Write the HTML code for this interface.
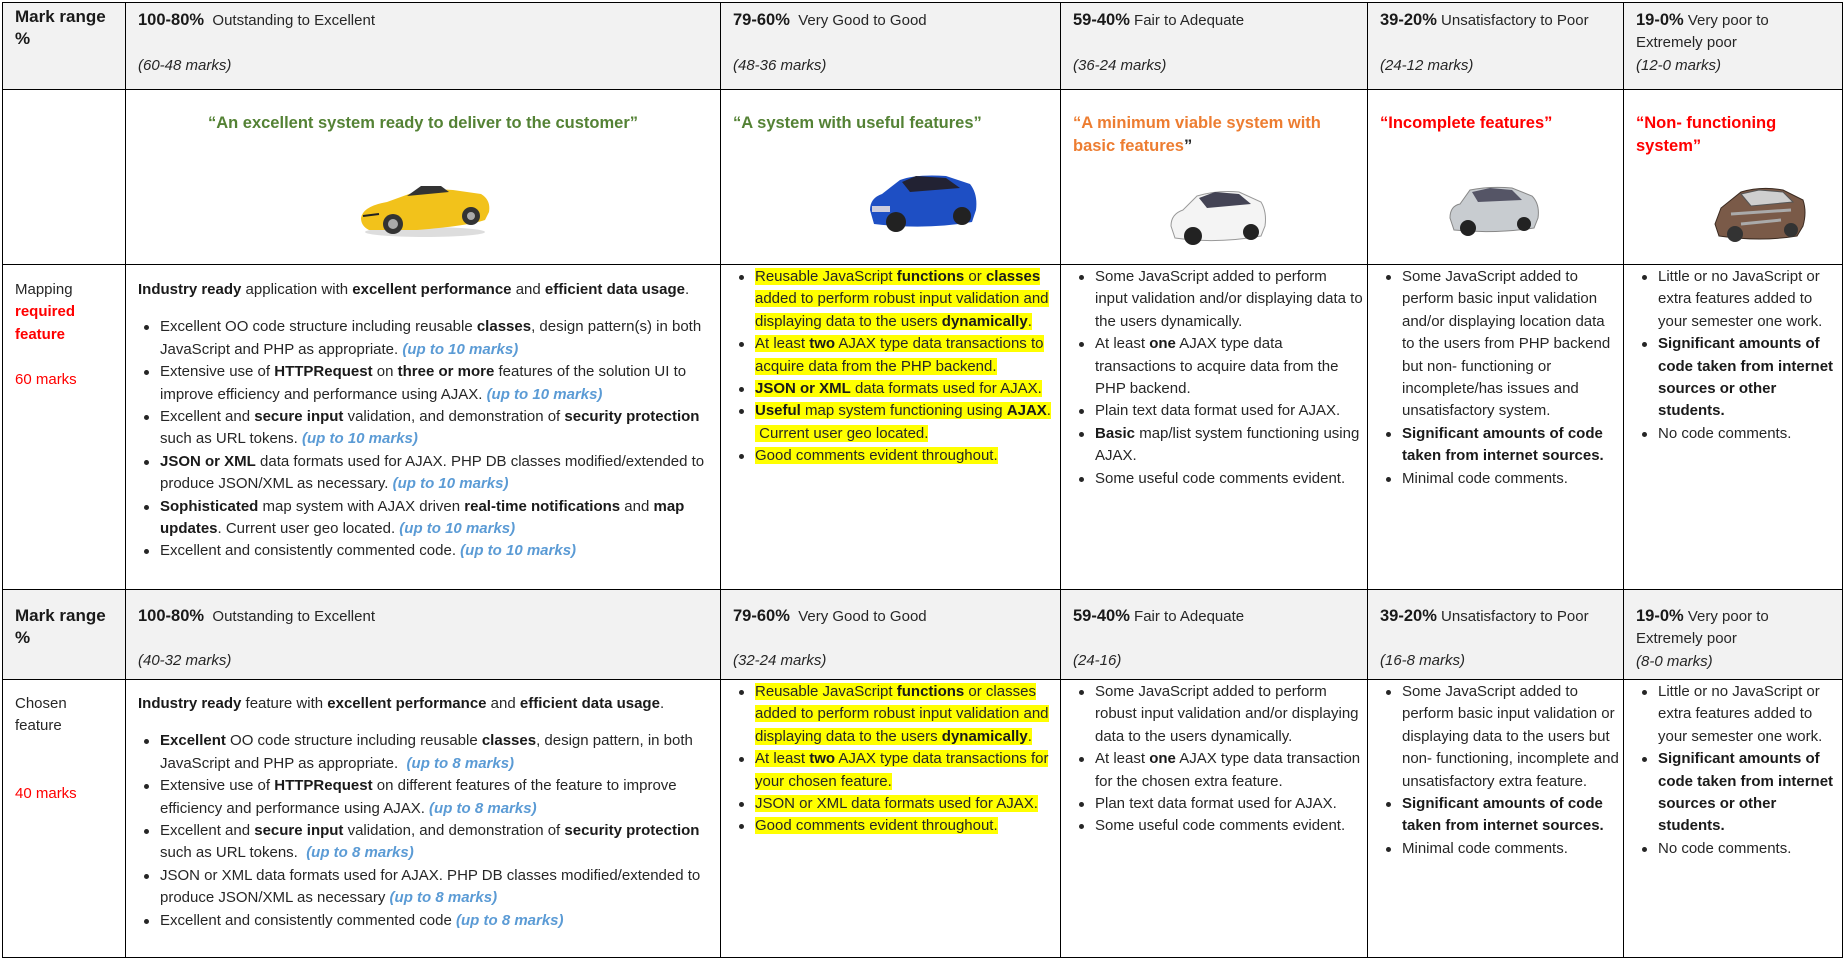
<!DOCTYPE html>
<html><head><meta charset="utf-8"><style>
*{margin:0;padding:0;box-sizing:border-box}
body{width:1846px;height:961px;background:#fff;position:relative;overflow:hidden;font-family:"Liberation Sans",Arial,sans-serif;font-size:15px;color:#262626;line-height:22.4px}
.c{position:absolute;border:1px solid #000;padding:6px 12px 0 12px;overflow:hidden}
.h{background:#f2f2f2}
b{font-weight:bold;color:#1a1a1a}
.hd b{font-size:16.5px}
i{font-style:italic}
ul{list-style:none}
li{position:relative;padding-left:22px}
li:before{content:"";position:absolute;left:6px;top:9px;width:5px;height:5px;border-radius:50%;background:#262626}
.hl{background:#ffff00}
.bl{color:#5b9bd5;font-weight:bold;font-style:italic}
.red{color:#ff0000}
.q{font-weight:bold;font-size:16.5px;line-height:23px}
.g{color:#548235}.o{color:#ed7d31}
svg{position:absolute}
</style></head><body>

<div class="c h hd" style="left:2px;top:2px;width:124px;height:88px;padding-top:3px;line-height:21px"><b style="font-size:17px">Mark range<br>%</b></div>
<div class="c h hd" style="left:125px;top:2px;width:596px;height:88px"><b>100-80%</b>&nbsp; Outstanding to Excellent<br><br><i>(60-48 marks)</i></div>
<div class="c h hd" style="left:720px;top:2px;width:341px;height:88px"><b>79-60%</b>&nbsp; Very Good to Good<br><br><i>(48-36 marks)</i></div>
<div class="c h hd" style="left:1060px;top:2px;width:308px;height:88px"><b>59-40%</b> Fair to Adequate<br><br><i>(36-24 marks)</i></div>
<div class="c h hd" style="left:1367px;top:2px;width:257px;height:88px"><b>39-20%</b> Unsatisfactory to Poor<br><br><i>(24-12 marks)</i></div>
<div class="c h hd" style="left:1623px;top:2px;width:220px;height:88px"><b>19-0%</b> Very poor to<br>Extremely poor<br><i>(12-0 marks)</i></div>

<div class="c" style="left:2px;top:89px;width:124px;height:176px"></div>
<div class="c" style="left:125px;top:89px;width:596px;height:176px;text-align:center;padding-top:22px"><span class="q g">“An excellent system ready to deliver to the customer”</span></div>
<div class="c" style="left:720px;top:89px;width:341px;height:176px;padding-top:22px"><span class="q g">“A system with useful features”</span></div>
<div class="c" style="left:1060px;top:89px;width:308px;height:176px;padding-top:22px"><div class="q o">“A minimum viable system with basic features<span style="color:#262626">”</span></div></div>
<div class="c" style="left:1367px;top:89px;width:257px;height:176px;padding-top:22px"><span class="q red">“Incomplete features”</span></div>
<div class="c" style="left:1623px;top:89px;width:220px;height:176px;padding-top:22px"><div class="q red">“Non- functioning system”</div></div>

<svg style="left:357px;top:180px" width="136" height="58" viewBox="0 0 136 58"><ellipse cx="68" cy="52" rx="60" ry="5" fill="#ddd"/><path d="M4 38 Q6 26 30 22 L52 14 Q70 8 96 10 L124 14 Q134 20 132 32 L128 40 Q110 46 60 50 L12 50 Q4 46 4 38Z" fill="#f2c21b"/><path d="M50 16 L64 6 L84 6 L92 12 Z" fill="#333"/><circle cx="36" cy="44" r="10" fill="#333"/><circle cx="36" cy="44" r="5" fill="#aaa"/><circle cx="114" cy="36" r="9" fill="#333"/><circle cx="114" cy="36" r="4" fill="#aaa"/><path d="M6 36 L22 34" stroke="#222" stroke-width="2"/></svg>
<svg style="left:866px;top:170px" width="114" height="66" viewBox="0 0 114 66"><path d="M4 40 Q4 28 16 24 L34 10 Q50 4 80 6 L104 14 Q112 24 110 40 L106 52 Q60 60 8 54Z" fill="#1e4fc4"/><path d="M36 12 L50 6 L80 8 L94 18 L44 22Z" fill="#223"/><circle cx="30" cy="52" r="10" fill="#222"/><circle cx="96" cy="46" r="9" fill="#222"/><rect x="6" y="36" width="18" height="6" fill="#ccd"/></svg>
<svg style="left:1167px;top:186px" width="102" height="62" viewBox="0 0 102 62"><path d="M4 40 Q4 28 16 24 L30 10 Q50 4 72 6 L94 16 Q100 26 98 40 L94 50 Q50 58 8 52Z" fill="#f4f4f4" stroke="#999"/><path d="M32 12 L48 6 L72 8 L84 18 L40 22Z" fill="#445"/><circle cx="26" cy="50" r="9" fill="#222"/><circle cx="84" cy="46" r="8" fill="#222"/></svg>
<svg style="left:1446px;top:184px" width="96" height="54" viewBox="0 0 96 54"><path d="M4 34 Q4 22 14 20 L24 6 Q44 2 66 4 L86 12 Q94 20 92 34 L88 44 Q48 50 8 46Z" fill="#c8ccd0" stroke="#888"/><path d="M26 8 L44 4 L66 6 L76 16 L32 18Z" fill="#556"/><circle cx="22" cy="44" r="8" fill="#222"/><circle cx="78" cy="40" r="7" fill="#222"/></svg>
<svg style="left:1711px;top:184px" width="98" height="62" viewBox="0 0 98 62"><path d="M4 40 L10 24 L30 8 Q50 2 72 6 L92 16 Q96 28 92 42 L86 52 Q50 58 8 52Z" fill="#7a5a48" stroke="#3a2a20"/><path d="M30 10 L48 6 L72 8 L82 18 L40 22Z" fill="#cfcfcf" stroke="#555"/><path d="M20 30 L80 26 M30 40 L70 36" stroke="#aaa" stroke-width="3"/><circle cx="24" cy="50" r="8" fill="#333"/><circle cx="80" cy="46" r="7" fill="#333"/></svg>

<div class="c" style="left:2px;top:264px;width:124px;height:326px;padding-top:14px">Mapping<br><b class="red">required<br>feature</b><br><br><span class="red">60 marks</span></div>
<div class="c" style="left:125px;top:264px;width:596px;height:326px;padding-top:14px;padding-right:4px">
<div style="margin-bottom:15px"><b>Industry ready</b> application with <b>excellent performance</b> and <b>efficient data usage</b>.</div>
<ul>
<li>Excellent OO code structure including reusable <b>classes</b>, design pattern(s) in both JavaScript and PHP as appropriate. <span class="bl">(up to 10 marks)</span></li>
<li>Extensive use of <b>HTTPRequest</b> on <b>three or more</b> features of the solution UI to improve efficiency and performance using AJAX. <span class="bl">(up to 10 marks)</span></li>
<li>Excellent and <b>secure input</b> validation, and demonstration of <b>security protection</b> such as URL tokens. <span class="bl">(up to 10 marks)</span></li>
<li><b>JSON or XML</b> data formats used for AJAX. PHP DB classes modified/extended to produce JSON/XML as necessary. <span class="bl">(up to 10 marks)</span></li>
<li><b>Sophisticated</b> map system with AJAX driven <b>real-time notifications</b> and <b>map updates</b>. Current user geo located. <span class="bl">(up to 10 marks)</span></li>
<li>Excellent and consistently commented code. <span class="bl">(up to 10 marks)</span></li>
</ul></div>
<div class="c" style="left:720px;top:264px;width:341px;height:326px;padding-top:1px;padding-right:4px"><ul>
<li><span class="hl">Reusable JavaScript <b>functions</b> or <b>classes</b> added to perform robust input validation and displaying data to the users <b>dynamically</b>.</span></li>
<li><span class="hl">At least <b>two</b> AJAX type data transactions to acquire data from the PHP backend.</span></li>
<li><span class="hl"><b>JSON or XML</b> data formats used for AJAX.</span></li>
<li><span class="hl"><b>Useful</b> map system functioning using <b>AJAX</b>. &nbsp;Current user geo located.</span></li>
<li><span class="hl">Good comments evident throughout.</span></li>
</ul></div>
<div class="c" style="left:1060px;top:264px;width:308px;height:326px;padding-top:1px;padding-right:4px"><ul>
<li>Some JavaScript added to perform input validation and/or displaying data to the users dynamically.</li>
<li>At least <b>one</b> AJAX type data transactions to acquire data from the PHP backend.</li>
<li>Plain text data format used for AJAX.</li>
<li><b>Basic</b> map/list system functioning using AJAX.</li>
<li>Some useful code comments evident.</li>
</ul></div>
<div class="c" style="left:1367px;top:264px;width:257px;height:326px;padding-top:1px;padding-right:4px"><ul>
<li>Some JavaScript added to perform basic input validation and/or displaying location data to the users from PHP backend but non- functioning or incomplete/has issues and unsatisfactory system.</li>
<li><b>Significant amounts of code taken from internet sources.</b></li>
<li>Minimal code comments.</li>
</ul></div>
<div class="c" style="left:1623px;top:264px;width:220px;height:326px;padding-top:1px;padding-right:2px"><ul>
<li>Little or no JavaScript or extra features added to your semester one work.</li>
<li><b>Significant amounts of code taken from internet sources or other students.</b></li>
<li>No code comments.</li>
</ul></div>

<div class="c h hd" style="left:2px;top:589px;width:124px;height:91px;padding-top:15px;line-height:21px"><b style="font-size:17px">Mark range<br>%</b></div>
<div class="c h hd" style="left:125px;top:589px;width:596px;height:91px;padding-top:15px"><b>100-80%</b>&nbsp; Outstanding to Excellent<br><div style="height:22px"></div><i>(40-32 marks)</i></div>
<div class="c h hd" style="left:720px;top:589px;width:341px;height:91px;padding-top:15px"><b>79-60%</b>&nbsp; Very Good to Good<br><div style="height:22px"></div><i>(32-24 marks)</i></div>
<div class="c h hd" style="left:1060px;top:589px;width:308px;height:91px;padding-top:15px"><b>59-40%</b> Fair to Adequate<br><div style="height:22px"></div><i>(24-16)</i></div>
<div class="c h hd" style="left:1367px;top:589px;width:257px;height:91px;padding-top:15px"><b>39-20%</b> Unsatisfactory to Poor<br><div style="height:22px"></div><i>(16-8 marks)</i></div>
<div class="c h hd" style="left:1623px;top:589px;width:220px;height:91px;padding-top:15px"><b>19-0%</b> Very poor to<br>Extremely poor<br><i>(8-0 marks)</i></div>

<div class="c" style="left:2px;top:679px;width:124px;height:279px;padding-top:13px">Chosen<br>feature<br><br><br><span class="red">40 marks</span></div>
<div class="c" style="left:125px;top:679px;width:596px;height:279px;padding-top:13px;padding-right:4px">
<div style="margin-bottom:15px"><b>Industry ready</b> feature with <b>excellent performance</b> and <b>efficient data usage</b>.</div>
<ul>
<li><b>Excellent</b> OO code structure including reusable <b>classes</b>, design pattern, in both JavaScript and PHP as appropriate. &nbsp;<span class="bl">(up to 8 marks)</span></li>
<li>Extensive use of <b>HTTPRequest</b> on different features of the feature to improve efficiency and performance using AJAX. <span class="bl">(up to 8 marks)</span></li>
<li>Excellent and <b>secure input</b> validation, and demonstration of <b>security protection</b> such as URL tokens. &nbsp;<span class="bl">(up to 8 marks)</span></li>
<li>JSON or XML data formats used for AJAX. PHP DB classes modified/extended to produce JSON/XML as necessary <span class="bl">(up to 8 marks)</span></li>
<li>Excellent and consistently commented code <span class="bl">(up to 8 marks)</span></li>
</ul></div>
<div class="c" style="left:720px;top:679px;width:341px;height:279px;padding-top:1px;padding-right:4px"><ul>
<li><span class="hl">Reusable JavaScript <b>functions</b> or classes added to perform robust input validation and displaying data to the users <b>dynamically</b>.</span></li>
<li><span class="hl">At least <b>two</b> AJAX type data transactions for your chosen feature.</span></li>
<li><span class="hl">JSON or XML data formats used for AJAX.</span></li>
<li><span class="hl">Good comments evident throughout.</span></li>
</ul></div>
<div class="c" style="left:1060px;top:679px;width:308px;height:279px;padding-top:1px;padding-right:4px"><ul>
<li>Some JavaScript added to perform robust input validation and/or displaying data to the users dynamically.</li>
<li>At least <b>one</b> AJAX type data transaction for the chosen extra feature.</li>
<li>Plan text data format used for AJAX.</li>
<li>Some useful code comments evident.</li>
</ul></div>
<div class="c" style="left:1367px;top:679px;width:257px;height:279px;padding-top:1px;padding-right:4px"><ul>
<li>Some JavaScript added to perform basic input validation or displaying data to the users but non- functioning, incomplete and unsatisfactory extra feature.</li>
<li><b>Significant amounts of code taken from internet sources.</b></li>
<li>Minimal code comments.</li>
</ul></div>
<div class="c" style="left:1623px;top:679px;width:220px;height:279px;padding-top:1px;padding-right:2px"><ul>
<li>Little or no JavaScript or extra features added to your semester one work.</li>
<li><b>Significant amounts of code taken from internet sources or other students.</b></li>
<li>No code comments.</li>
</ul></div>
</body></html>
